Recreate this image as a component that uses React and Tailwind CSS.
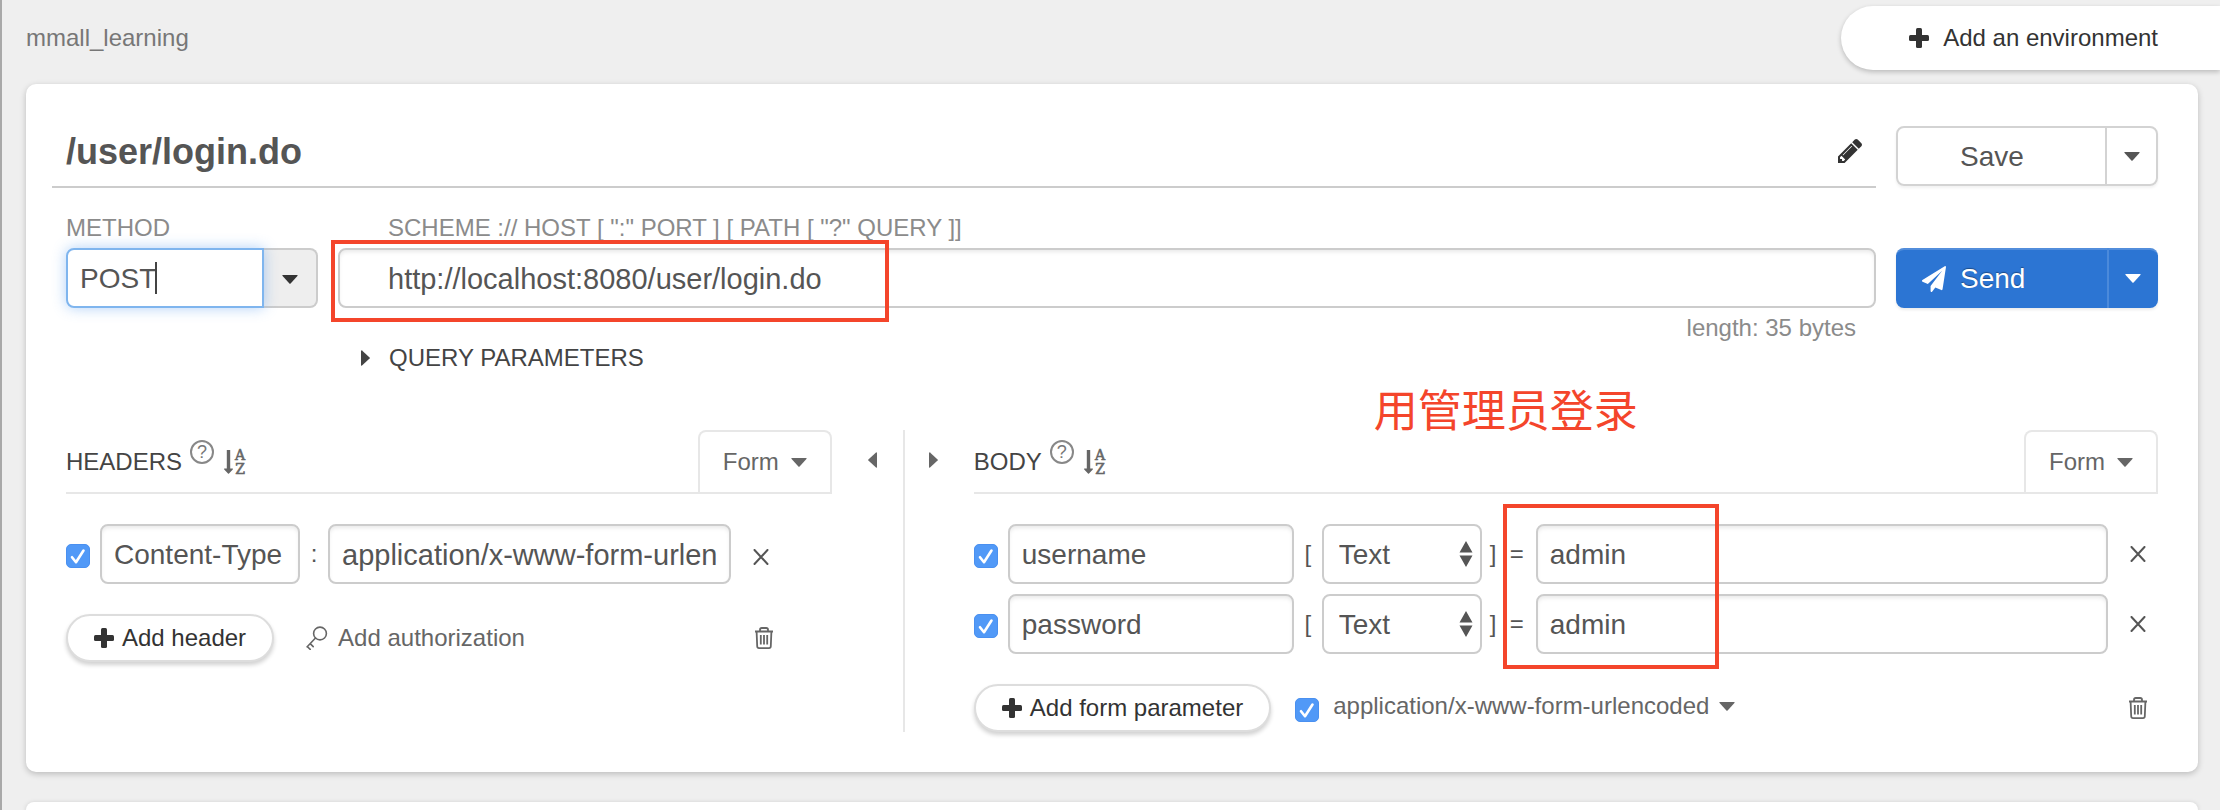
import { useState } from "react";

const fieldBase =
  "h-[60px] min-w-0 rounded-lg border-2 border-[#ccc] bg-white pt-0.5 text-[#555] outline-none shadow-[inset_0_3px_4px_-1px_rgba(0,0,0,0.09)]";
const field = fieldBase + " text-[28px]";
const longField = fieldBase + " text-[29px]";

function PlusIcon() {
  return (
    <svg className="h-5 w-5 shrink-0" viewBox="0 0 20 20" fill="currentColor" aria-hidden="true">
      <rect x="7" y="0" width="6" height="20" rx="1.5" />
      <rect x="0" y="7" width="20" height="6" rx="1.5" />
    </svg>
  );
}

function CaretDown() {
  return (
    <svg className="h-[9px] w-4 shrink-0" viewBox="0 0 16 9" fill="currentColor" aria-hidden="true">
      <path d="M.8 0h14.400q.8.3.2 1L8.600 8.600q-.6.5-1.200 0L.6 1Q0 .3.8 0z" />
    </svg>
  );
}

function SideTriangle({ flip }) {
  return (
    <svg className="h-4 w-[9px] shrink-0" viewBox="0 0 9 16" fill="currentColor" aria-hidden="true">
      <path d={flip ? "M9 .8v14.400q-.3.8-1 .2L.4 8.600q-.5-.6 0-1.200L8 .6Q8.700 0 9 .8z" : "M0 .8v14.400q.3.8 1 .2L8.600 8.600q.5-.6 0-1.200L1 .6Q.3 0 0 .8z"} />
    </svg>
  );
}

function PencilIcon() {
  return (
    <svg className="h-6 w-6" viewBox="128 148 1516 1516" fill="currentColor" aria-hidden="true">
      <path d="M491 1536l91-91-235-235-91 91v107h128v128h107zm523-928q0-22-22-22-10 0-17 7l-542 542q-7 7-7 17 0 22 22 22 10 0 17-7l542-542q7-7 7-17zm-54-192l416 416-832 832h-416v-416zm683 96q0 53-37 90l-166 166-416-416 166-165q36-38 90-38 53 0 91 38l235 234q37 39 37 91z" />
    </svg>
  );
}

function PlaneIcon() {
  return (
    <svg className="h-[26px] w-6 shrink-0" viewBox="0 0 1792 1792" preserveAspectRatio="none" fill="currentColor" aria-hidden="true">
      <path d="M1764 11q33 24 27 64l-256 1536q-5 29-32 45-14 8-31 8-11 0-24-5l-453-185-242 295q-18 23-49 23-13 0-22-4-19-7-30.500-23.500t-11.500-36.500v-349l864-1059-1069 925-395-162q-37-14-40-55-2-40 32-59l1664-960q15-9 32-9 20 0 36 11z" />
    </svg>
  );
}

function SortIcon() {
  return (
    <svg className="h-[26px] w-[22px] overflow-visible" viewBox="0 0 22 26" fill="currentColor" aria-hidden="true">
      <path d="M2.800 1h3.400v18.500h2.300q.8.3.3.9l-3.800 4.200q-.5.4-1 0L.2 20.400q-.5-.6.3-.9h2.300z" />
      <text x="16" y="11" textAnchor="middle" fontFamily="'DejaVu Serif', serif" fontSize="14" stroke="currentColor" strokeWidth="0.600">A</text>
      <text x="16" y="25" textAnchor="middle" fontFamily="'DejaVu Serif', serif" fontSize="14" stroke="currentColor" strokeWidth="0.600">Z</text>
    </svg>
  );
}

function KeyIcon() {
  return (
    <svg className="h-6 w-[22px] shrink-0" viewBox="0 0 22 24" fill="none" stroke="currentColor" strokeWidth="1.600" strokeLinecap="round" aria-hidden="true">
      <circle cx="14" cy="7.500" r="6.400" />
      <path d="M9.500 12L1.200 20.800M1.200 20.500l3 2.900M4.200 17.700l3 2.900" />
    </svg>
  );
}

function TrashIcon() {
  return (
    <svg className="h-[22px] w-5" viewBox="0 0 20 22" fill="none" stroke="currentColor" strokeWidth="1.800" aria-hidden="true">
      <path d="M1 4.500h18M6 4.500v-1.700Q6 1 7.800 1h4.400Q14 1 14 2.800v1.700" />
      <path d="M2.600 4.500l.6 14.700q.1 1.900 1.800 1.900h10q1.700 0 1.800-1.900l.6-14.700" />
      <path d="M6.800 8v9.500M10 8v9.500M13.200 8v9.500" />
    </svg>
  );
}

function CloseIcon() {
  return (
    <svg className="h-4 w-4" viewBox="0 0 16 16" fill="none" stroke="currentColor" strokeWidth="2" strokeLinecap="round" aria-hidden="true">
      <path d="M1.500 1l13 14M14.500 1l-13 14" />
    </svg>
  );
}

function Checkbox({ id, label }) {
  const [on, setOn] = useState(true);
  return (
    <span className="grid shrink-0 pt-1">
      <input
        id={id}
        type="checkbox"
        aria-label={label}
        checked={on}
        onChange={() => setOn(!on)}
        className="col-start-1 row-start-1 h-6 w-6 appearance-none rounded-[5px] border border-[#bbb] bg-white checked:border-[#4a90f0] checked:bg-[#5199f7]"
      />
      {on && (
        <svg className="pointer-events-none col-start-1 row-start-1 h-6 w-6" viewBox="0 0 24 24" fill="none" stroke="#fff" strokeWidth="2.600" strokeLinecap="round" strokeLinejoin="round" aria-hidden="true">
          <path d="M6 13.200l4 5L17.500 6.500" />
        </svg>
      )}
    </span>
  );
}

function PillButton({ children }) {
  return (
    <button type="button" className="flex h-12 items-center gap-2 whitespace-nowrap rounded-full border-2 border-[#ddd] bg-white px-[26px] text-[#333] shadow-[0_3px_4px_rgba(0,0,0,0.18)]">
      <PlusIcon />
      {children}
    </button>
  );
}

function SectionHeader({ title }) {
  return (
    <div className="flex h-16 items-stretch justify-between border-b-2 border-[#e7e7e7]">
      <div className="flex items-center pt-0.5">
        <h2 className="text-[#444]">{title}</h2>
        <button type="button" aria-label={"Help about " + title.toLowerCase()} className="mb-5 ml-2 flex h-6 w-6 items-center justify-center rounded-full border-2 border-[#888] text-lg leading-5 text-[#777]">
          ?
        </button>
        <button type="button" aria-label={"Sort " + title.toLowerCase()} className="ml-[10px] text-[#666]">
          <SortIcon />
        </button>
      </div>
      <button type="button" className="flex items-center gap-3 rounded-t-lg border-2 border-b-0 border-[#e7e7e7] px-[23px] text-[#666]">
        Form
        <CaretDown />
      </button>
    </div>
  );
}

function BodyRow({ name, value }) {
  return (
    <div className="flex items-center text-2xl text-[#555]">
      <Checkbox id={name + "-on"} label={"Enable " + name} />
      <input aria-label="Parameter name" defaultValue={name} className={field + " ml-[10px] w-[286px] px-3"} />
      <span className="w-7 text-center">[</span>
      <span className="grid items-center">
        <select aria-label="Parameter type" defaultValue="Text" className="col-start-1 row-start-1 h-[60px] w-40 appearance-none rounded-lg border-2 border-[#ccc] bg-white px-[15px] pt-0.5 text-[28px] text-[#555] outline-none">
          <option>Text</option>
          <option>File</option>
        </select>
        <svg className="pointer-events-none col-start-1 row-start-1 mr-[9px] h-[26px] w-[14px] justify-self-end" viewBox="0 0 14 26" fill="currentColor" aria-hidden="true">
          <path d="M7 0l6.500 11.500H.5zM7 26L.5 14.500h13z" />
        </svg>
      </span>
      <span className="flex w-[54px] justify-between pl-2 pr-3">
        <span>]</span>
        <span>=</span>
      </span>
      <input aria-label={name + " value"} defaultValue={value} className={field + " flex-1 px-3"} />
      <button type="button" aria-label={"Remove " + name} className="flex w-[50px] justify-start pl-[22px] text-[#555]">
        <CloseIcon />
      </button>
    </div>
  );
}

export default function App() {
  return (
    <div className="flex min-h-screen flex-col overflow-hidden border-l-2 border-[#a9a9a9] bg-[#efefef] pl-6 font-['Liberation_Sans',Arial,sans-serif] text-2xl leading-8">
      <header className="flex items-center justify-between pt-[6px]">
        <span className="text-[#777]">mmall_learning</span>
        <button type="button" className="flex h-16 items-center gap-[14px] rounded-l-full bg-white pl-[68px] pr-[62px] text-[#333] shadow-[0_2px_5px_rgba(0,0,0,0.22)]">
          <PlusIcon />
          Add an environment
        </button>
      </header>

      <main className="mr-[22px] mt-[14px] flex flex-1 flex-col gap-[30px]">
        <section className="rounded-[10px] bg-white pb-10 pl-[26px] pr-10 pt-[42px] shadow-[0_2px_6px_rgba(0,0,0,0.22)]">
          <div className="flex items-start gap-5">
            <div className="flex h-[62px] flex-1 items-center justify-between border-b-2 border-[#ccc] px-[14px] pb-[10px]">
              <h1 className="pt-0.5 text-4xl font-bold text-[#555]">/user/login.do</h1>
              <button type="button" aria-label="Rename request" className="text-[#333]">
                <PencilIcon />
              </button>
            </div>
            <div className="flex h-[60px] w-[262px] rounded-lg border-2 border-[#d3d3d3] text-[28px] text-[#555] shadow-[0_2px_3px_rgba(0,0,0,0.06)]">
              <button type="button" className="flex-1 pl-[62px] pt-0.5 text-left">Save</button>
              <button type="button" aria-label="More save options" className="flex w-[51px] items-center justify-center border-l-2 border-[#d3d3d3]">
                <CaretDown />
              </button>
            </div>
          </div>

          <div className="mt-6 flex items-start gap-5 pl-[14px]">
            <div className="w-[252px] shrink-0">
              <label htmlFor="method" className="block text-[#8b8b8b]">METHOD</label>
              <div className="relative mt-1 flex">
                <input id="method" defaultValue="POST" className="relative h-[60px] w-[198px] rounded-l-lg border-2 border-[#7fb5ee] bg-white px-3 pt-0.5 text-[28px] text-[#555] caret-transparent shadow-[0_0_14px_rgba(82,153,240,0.45)] outline-none" />
                <span className="pointer-events-none absolute left-[89px] top-[14px] h-8 w-0.5 bg-[#444]" />
                <button type="button" aria-label="Choose method" className="flex h-[60px] w-[54px] items-center justify-center rounded-r-lg border-2 border-l-0 border-[#ccc] bg-[#eee] pt-0.5 text-[#333]">
                  <CaretDown />
                </button>
              </div>
            </div>

            <div className="min-w-0 flex-1">
              <label htmlFor="url" className="block pl-[50px] text-[#8b8b8b]">SCHEME :// HOST [ ":" PORT ] [ PATH [ "?" QUERY ]]</label>
              <div className="relative mt-1">
                <input id="url" defaultValue="http://localhost:8080/user/login.do" className={longField + " block w-full pl-12 pr-4"} />
                <div className="pointer-events-none absolute -left-[7px] -top-2 h-[82px] w-[558px] border-4 border-[#f4452b]" />
              </div>
              <p className="mt-[6px] pr-5 text-right leading-7 text-[#8b8b8b]">length: 35 bytes</p>
              <button type="button" className="flex items-center gap-[19px] pl-[23px] text-[#444]">
                <SideTriangle />
                QUERY PARAMETERS
              </button>
            </div>

            <div className="mt-9 flex h-[60px] w-[262px] rounded-lg bg-[#2c75d3] text-[28px] text-white shadow-[inset_0_3px_0_-1px_rgba(255,255,255,0.18),0_2px_3px_rgba(0,0,0,0.08)]">
              <button type="button" className="flex flex-1 items-center gap-[14px] pl-[26px] pt-0.5 text-left [text-shadow:0_-1px_1px_rgba(0,0,0,0.35)]">
                <PlaneIcon />
                Send
              </button>
              <button type="button" aria-label="More send options" className="flex w-[51px] items-center justify-center border-l-2 border-[#4b8adb] pr-0.5">
                <CaretDown />
              </button>
            </div>
          </div>

          <div className="mt-14 grid grid-cols-[2fr_3fr] pl-[14px]">
            <div className="flex min-w-0">
              <section className="min-w-0 flex-1">
                <SectionHeader title="HEADERS" />
                <div className="mt-[30px] flex items-center text-[#555]">
                  <Checkbox id="header-on" label="Enable Content-Type" />
                  <input aria-label="Header name" defaultValue="Content-Type" className={field + " ml-[10px] w-[200px] px-3"} />
                  <span className="w-7 text-center">:</span>
                  <input aria-label="Header value" defaultValue="application/x-www-form-urlencoded" className={longField + " flex-1 px-3"} />
                  <button type="button" aria-label="Remove header" className="flex w-[101px] pl-[22px] pt-[6px] text-[#555]">
                    <CloseIcon />
                  </button>
                </div>
                <div className="mt-[30px] flex items-center">
                  <PillButton>Add header</PillButton>
                  <button type="button" className="ml-8 flex items-center gap-[10px] text-[#666]">
                    <KeyIcon />
                    Add authorization
                  </button>
                  <button type="button" aria-label="Delete all headers" className="ml-auto mr-[58px] text-[#666]">
                    <TrashIcon />
                  </button>
                </div>
              </section>
              <button type="button" aria-label="Expand body" className="flex h-16 w-[71px] shrink-0 items-center pb-1 pl-9 text-[#666]">
                <SideTriangle flip />
              </button>
            </div>

            <div className="flex min-w-0 border-l-2 border-[#e7e7e7]">
              <button type="button" aria-label="Expand headers" className="flex h-16 w-[69px] shrink-0 items-center pb-1 pl-6 text-[#666]">
                <SideTriangle />
              </button>
              <section className="relative min-w-0 flex-1">
                <p className="pointer-events-none absolute -top-11 left-[400px] whitespace-nowrap font-['Noto_Sans_CJK_SC',sans-serif] text-[44px] leading-[44px] text-[#f4452b]">用管理员登录</p>
                <SectionHeader title="BODY" />
                <div className="relative mt-[30px] flex flex-col gap-[10px]">
                  <BodyRow name="username" value="admin" />
                  <BodyRow name="password" value="admin" />
                  <div className="pointer-events-none absolute -top-5 left-[529px] h-[165px] w-[216px] border-4 border-[#f4452b]" />
                </div>
                <div className="mt-[30px] flex items-center">
                  <PillButton>Add form parameter</PillButton>
                  <span className="ml-6 flex">
                    <Checkbox id="encoding-on" label="Set content type" />
                  </span>
                  <button type="button" className="ml-[14px] flex items-center gap-[10px] pb-1 text-[#666]">
                    application/x-www-form-urlencoded
                    <CaretDown />
                  </button>
                  <button type="button" aria-label="Delete all parameters" className="ml-auto mr-[10px] text-[#666]">
                    <TrashIcon />
                  </button>
                </div>
              </section>
            </div>
          </div>
        </section>

        <section className="flex-1 rounded-t-[10px] bg-white shadow-[0_1px_5px_rgba(0,0,0,0.18)]" />
      </main>
    </div>
  );
}
